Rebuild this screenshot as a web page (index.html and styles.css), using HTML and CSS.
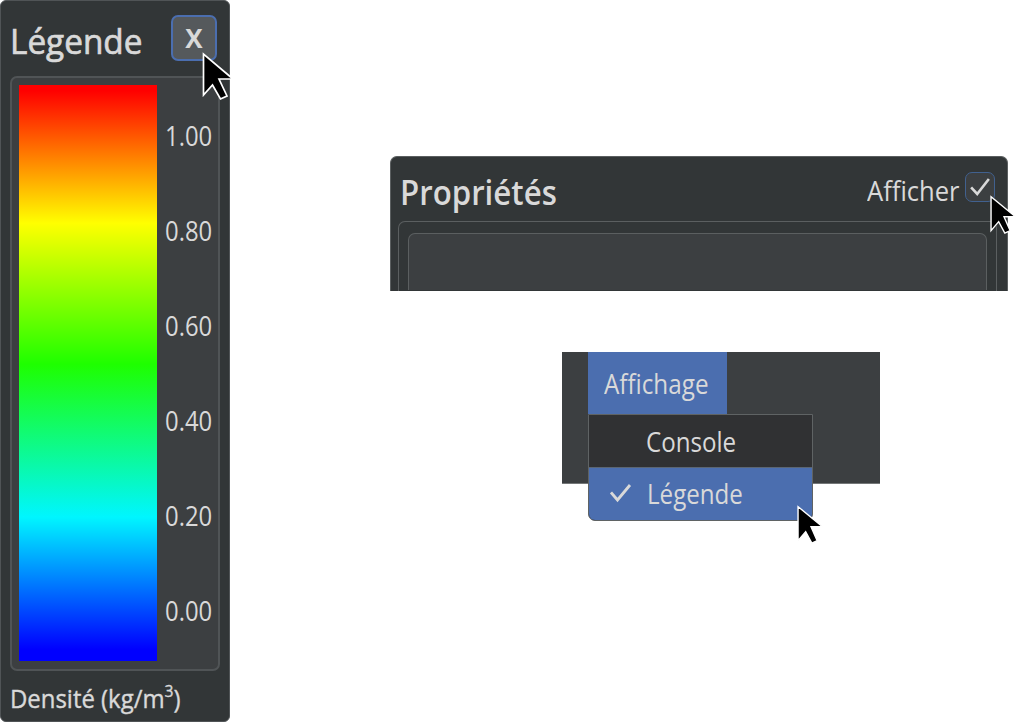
FILE: index.html
```
<!DOCTYPE html>
<html lang="fr">
<head>
<meta charset="utf-8">
<title>Légende</title>
<link rel="stylesheet" href="styles.css">
</head>
<body>
<main class="board">
  <section class="legend">
    <header class="legend-head">
      <h1 class="title legend-title">Légende</h1>
      <button class="close"><span>X</span></button>
    </header>
    <div class="scale">
      <div class="ramp"></div>
      <div class="ticks">
        <span>1.00</span><span>0.80</span><span>0.60</span><span>0.40</span><span>0.20</span><span>0.00</span>
      </div>
    </div>
    <footer class="unit"><span>Densité (kg/m<sup>3</sup>)</span></footer>
    <svg class="cursor cursor-legend" viewBox="0 0 34 50"><path d="M1.500 2V43L10.500 33L18.500 47L25 44L17 27H31Z"/></svg>
  </section>
  <div class="side">
    <section class="props">
      <header class="props-head">
        <h2 class="title props-title">Propriétés</h2>
        <label class="show"><span class="show-text">Afficher</span>
          <span class="check"><svg viewBox="0 0 30 30"><path d="M5.500 15.500L12 22.500L24.500 6.500"/></svg></span>
        </label>
      </header>
      <div class="frame"><div class="inner"></div></div>
      <svg class="cursor cursor-props" viewBox="0 0 34 50"><path d="M1.200 2V43.500L10.500 32.500L18 46.500L24.500 43.500L17 26.500H31Z"/></svg>
    </section>
    <nav class="menubar">
      <div class="tab"><span>Affichage</span></div>
      <div class="menu">
        <div class="item"><span class="console">Console</span></div>
        <div class="item active"><svg class="tick" viewBox="0 0 22 22"><path d="M1 10.500L7.500 18L20 3"/></svg><span class="entry">Légende</span></div>
      </div>
      <svg class="cursor cursor-menu" viewBox="0 0 34 50"><path d="M1.200 2V43.500L10.500 32.500L18 46.500L24.500 43.500L17 26.500H31Z"/></svg>
    </nav>
  </div>
</main>
</body>
</html>
```
FILE: styles.css
```
* { box-sizing: border-box; }
body {
  margin: 0;
  background: #fff;
  color: #d9d9d9;
  font: 400 26px/36px "Open Sans", "Noto Sans", sans-serif;
}
span, h1, h2 { white-space: nowrap; }
.board { display: flex; width: 1024px; height: 723px; overflow: hidden; }
.title { margin: 0; font-size: 34px; line-height: 46px; font-weight: 500; transform-origin: 0 50%; }

.legend {
  position: relative;
  z-index: 1;
  display: flex;
  flex-direction: column;
  width: 230px;
  height: 722px;
  padding: 14px 10px 0;
  background: #323637;
  border: 1px solid #505456;
  border-radius: 6px;
}
.legend-head { display: flex; justify-content: space-between; height: 61px; padding-right: 2px; }
.legend-title { width: 132px; margin: 3px 0 0 -1px; transform: scaleX(.98); -webkit-text-stroke: .7px #d9d9d9; }
.close {
  display: grid;
  place-items: center;
  width: 46px;
  height: 46px;
  padding: 0 0 1px;
  background: #55595c;
  border: 2px solid #4b6eaf;
  border-radius: 7px;
  color: #d9d9d9;
  font: 700 26px/36px "Open Sans", sans-serif;
}
.scale {
  display: flex;
  width: 210px;
  height: 595px;
  margin-left: -1px;
  padding: 7px 7px 8px;
  background: #3c3f41;
  border: 2px solid #505456;
  border-radius: 7px;
}
.ramp {
  width: 138px;
  height: 576px;
  background: linear-gradient(#f00 1%, #ff0 24%, #1eff00 48.500%, #00f6ff 75%, #00f 98%);
}
.ticks { width: 54px; padding: 33px 0 0 8px; }
.ticks span { display: block; width: 54px; height: 95px; font-size: 26.500px; transform: scaleX(.9); transform-origin: 0 50%; }
.unit { height: 39px; padding: 9px 0 0; }
.unit span { display: block; width: 172px; margin-left: -1px; transform: scaleX(.92); transform-origin: 0 50%; -webkit-text-stroke: .4px #d9d9d9; }
.unit sup { font-size: 17px; line-height: 0; vertical-align: 11px; }

.side { display: flex; flex-direction: column; width: 794px; padding: 156px 0 0 160px; }
.props {
  position: relative;
  display: flex;
  flex-direction: column;
  width: 618px;
  height: 135px;
  padding: 14px 10px 0 7px;
  background: #323637;
  border: 1px solid #5b5f60;
  border-bottom: 0;
  border-radius: 7px 7px 0 0;
}
.props-head { display: flex; justify-content: space-between; height: 50px; padding: 0 2px 0 2px; }
.props-title { width: 160px; transform: scaleX(.918); margin-top: -2px; font-weight: 600; }
.show { display: flex; gap: 5px; }
.show-text { width: 93px; margin-top: 2px; font-size: 26.500px; transform: scaleX(.965); transform-origin: 0 50%; }
.check { width: 30px; height: 30px; margin-top: 1px; background: #3c3f41; border: 1.500px solid #41618f; border-radius: 7px; }
.check svg, .tick { fill: none; stroke: #d9d9d9; stroke-width: 2.800; }
.check svg { display: block; width: 28px; height: 28px; }
.frame { height: 70px; padding: 11px 9px 0; border: 1.500px solid #5b5f60; border-bottom: 0; border-radius: 7px 7px 0 0; }
.inner { height: 57px; background: #3c3f41; border: 1.500px solid #5b5f60; border-bottom: 0; border-radius: 7px 7px 0 0; }

.menubar {
  position: relative;
  width: 318px;
  height: 132px;
  margin: 61px 0 0 172px;
  padding-left: 26px;
  background: #3c3f41;
  border-bottom: 1px solid #747778;
}
.tab { width: 139px; height: 62px; padding: 14px 0 0 16px; background: #4b6eaf; }
.tab span { display: block; font-size: 26.500px; transform: scaleX(.915); transform-origin: 0 50%; }
.menu {
  position: absolute;
  left: 26px;
  top: 62px;
  width: 225px;
  height: 107px;
  border: 1.500px solid #5f6364;
  border-radius: 0 0 7px 7px;
  background: #303133;
  overflow: hidden;
}
.item { display: flex; height: 52px; padding: 9px 0 0 57px; }
.item.active { height: 53px; padding: 8px 0 0 21px; background: #4b6eaf; border-top: 1px solid #5b6674; }
.tick { width: 22px; height: 22px; margin: 6px 15px 0 0; }
.item span { font-size: 26.500px; transform: scaleX(.91); transform-origin: 0 50%; }

.cursor { position: absolute; overflow: visible; fill: #000; stroke: #fff; stroke-width: 1.700; }
.cursor-legend { left: 201px; top: 51px; width: 34px; height: 50px; }
.cursor-props { left: 599px; top: 38px; width: 28px; height: 41px; }
.cursor-menu { left: 235px; top: 153px; width: 28px; height: 41px; }
```
